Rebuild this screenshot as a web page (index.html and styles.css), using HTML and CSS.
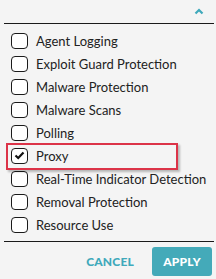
FILE: index.html
```html
<!DOCTYPE html>
<html lang="en">

<head>
    <meta charset="UTF-8">
    <meta name="viewport" content="width=device-width, initial-scale=1.0">
    <title>Filter</title>
    <link rel="stylesheet" href="styles.css">
</head>

<body>
    <div class="panel">
        <div class="top">
            <svg class="chev" width="10" height="7" viewBox="0 0 10 7">
                <path d="M1.5 5.5 L5 2 L8.5 5.5" fill="none" stroke="#3fa9bb" stroke-width="2.2"/>
            </svg>
        </div>

        <ul class="opts">
            <li><span class="box"></span>Agent Logging</li>
            <li><span class="box"></span>Exploit Guard Protection</li>
            <li><span class="box"></span>Malware Protection</li>
            <li><span class="box"></span>Malware Scans</li>
            <li><span class="box"></span>Polling</li>
            <li class="hl"><span class="box">
                <svg width="11" height="9" viewBox="0 0 11 9">
                    <path d="M1.5 4.5 L4.2 7 L9.5 1.5" fill="none" stroke="#111" stroke-width="2.2"/>
                </svg>
            </span>Proxy</li>
            <li><span class="box"></span>Real-Time Indicator Detection</li>
            <li><span class="box"></span>Removal Protection</li>
            <li><span class="box"></span>Resource Use</li>
        </ul>

        <div class="actions">
            <button class="cancel">CANCEL</button>
            <button class="apply">APPLY</button>
        </div>
    </div>
</body>

</html>
```

FILE: styles.css
```css
* {
    box-sizing: border-box;
    margin: 0px;
    padding: 0px;
}

body {
    background-color: #f4f4f4;
    font-family: Lato, "Open Sans", sans-serif;
    color: #222;
}

.panel {
    width: 216px;
}

.top {
    height: 24px;
    margin: 0 2px 0 4px;
    border-bottom: 1px solid #1a1a1a;
    display: flex;
    justify-content: flex-end;
    align-items: flex-start;
    padding: 8px 10px 0 0;
}

.opts {
    list-style: none;
    padding: 5px 0;
    margin: 0 2px 0 4px;
    border-bottom: 1px solid #1a1a1a;
}

.opts li {
    height: 23px;
    display: flex;
    align-items: center;
    font-size: 13px;
    padding-left: 7px;
}

.box {
    width: 17px;
    height: 16px;
    border: 1.5px solid #1a1a1a;
    border-radius: 4px;
    margin-right: 8px;
    display: flex;
    align-items: center;
    justify-content: center;
    background: #fff;
}

.hl {
    position: relative;
}

.hl::after {
    content: "";
    position: absolute;
    left: 2px;
    top: -1px;
    width: 168px;
    height: 23px;
    border: 2px solid #dc3348;
    box-shadow: 2px 2px 2px rgba(0, 0, 0, 0.25);
}

.actions {
    display: flex;
    justify-content: flex-end;
    align-items: center;
    padding: 5px 4px 0 0;
    gap: 18px;
}

button {
    font-family: Lato, "Open Sans", sans-serif;
    font-weight: 900;
    font-size: 12px;
    border: none;
    letter-spacing: 0.2px;
}

.cancel {
    background: none;
    color: #3fa9bb;
}

.apply {
    background-color: #44aab9;
    color: #fff;
    width: 60px;
    height: 29px;
    border-radius: 3px;
}
```
